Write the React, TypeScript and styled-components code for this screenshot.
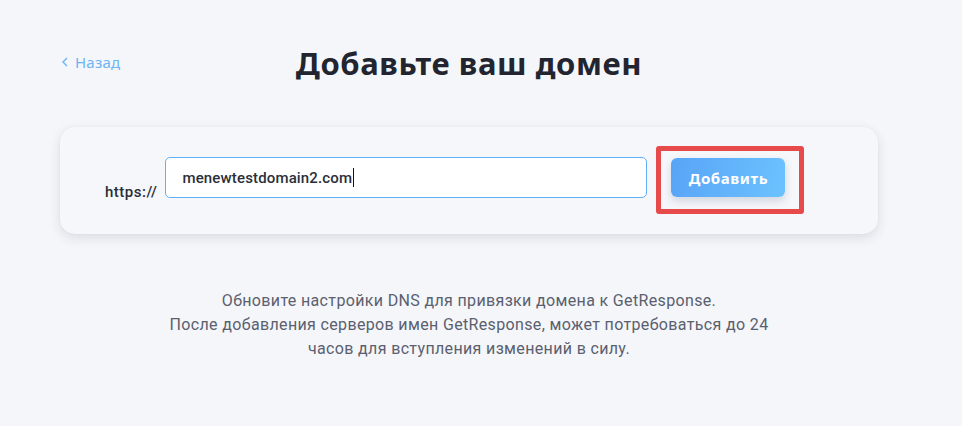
import React from "react";
import styled, { createGlobalStyle } from "styled-components";

const Global = createGlobalStyle`
  html, body { margin: 0; padding: 0; background: #f5f6fa; }
  body { font-family: Roboto, "Liberation Sans", sans-serif; }
`;

const Page = styled.div`
  width: 962px;
  height: 426px;
  box-sizing: border-box;
  padding: 38px 0 0 60px;
  background: #f5f6fa;
`;

const Column = styled.div`
  width: 818px;
  display: flex;
  flex-direction: column;
`;

const Header = styled.div`
  display: grid;
  grid-template-columns: 1fr auto 1fr;
  align-items: center;
  height: 50px;
`;

const Back = styled.a`
  display: flex;
  align-items: center;
  gap: 7px;
  padding-left: 2px;
  color: #6cb5f4;
  font-family: "Noto Sans", sans-serif;
  font-size: 15px;
  letter-spacing: 0.2px;
  text-decoration: none;
  margin-top: -2px;
`;

const Title = styled.h1`
  margin: 0;
  font-family: "Noto Sans", sans-serif;
  font-weight: 700;
  font-size: 31px;
  letter-spacing: 0.6px;
  color: #22252f;
`;

const Card = styled.div`
  margin-top: 39px;
  height: 107px;
  box-sizing: border-box;
  display: flex;
  align-items: flex-start;
  padding: 19px 0 20px 45px;
  border-radius: 15px;
  background: #f6f7fb;
  box-shadow: 0 4px 12px rgba(30, 40, 70, 0.12), 0 0 2px rgba(30, 40, 70, 0.05);
`;

const Prefix = styled.span`
  align-self: flex-end;
  margin-bottom: 13px;
  font-size: 15px;
  font-weight: 500;
  letter-spacing: 0.5px;
  color: #2a2e38;
  line-height: 17px;
`;

const Input = styled.div`
  margin: 11px 0 0 8px;
  width: 482px;
  height: 41px;
  box-sizing: border-box;
  display: flex;
  align-items: center;
  padding-left: 16px;
  background: #fff;
  border: 1px solid #5fb0f6;
  border-radius: 5px;
  font-size: 15px;
  font-weight: 500;
  letter-spacing: 0.15px;
  color: #2b2f3a;
`;

const Caret = styled.span`
  display: inline-block;
  width: 1px;
  height: 19px;
  margin-left: 1px;
  background: #111;
`;

const Highlight = styled.div`
  margin-left: 9px;
  padding: 7px 14px 12px 10px;
  border: 5px solid #e64a4a;
  border-radius: 3px;
  display: flex;
`;

const Button = styled.button`
  width: 114px;
  height: 39px;
  border: none;
  border-radius: 6px;
  background: linear-gradient(100deg, #58a4f7 0%, #6cc2fe 100%);
  box-shadow: 0 4px 8px rgba(40, 60, 100, 0.18);
  color: #fff;
  font-family: "Noto Sans", sans-serif;
  font-weight: 700;
  font-size: 15px;
  letter-spacing: 0.6px;
`;

const Note = styled.p`
  margin: 55px 0 0;
  text-align: center;
  font-size: 16px;
  letter-spacing: 0.35px;
  line-height: 24px;
  color: #5a606f;
`;

export default function App() {
  return (
    <>
      <Global />
      <Page>
        <Column>
          <Header>
            <Back href="#">
              <svg width="6" height="10" viewBox="0 0 6 10">
                <path d="M5 1L1 5l4 4" fill="none" stroke="#6cb5f4" strokeWidth="1.4" />
              </svg>
              Назад
            </Back>
            <Title>Добавьте ваш домен</Title>
            <span />
          </Header>
          <Card>
            <Prefix>https://</Prefix>
            <Input>
              menewtestdomain2.com
              <Caret />
            </Input>
            <Highlight>
              <Button>Добавить</Button>
            </Highlight>
          </Card>
          <Note>
            Обновите настройки DNS для привязки домена к GetResponse.
            <br />
            После добавления серверов имен GetResponse, может потребоваться до 24
            <br />
            часов для вступления изменений в силу.
          </Note>
        </Column>
      </Page>
    </>
  );
}
